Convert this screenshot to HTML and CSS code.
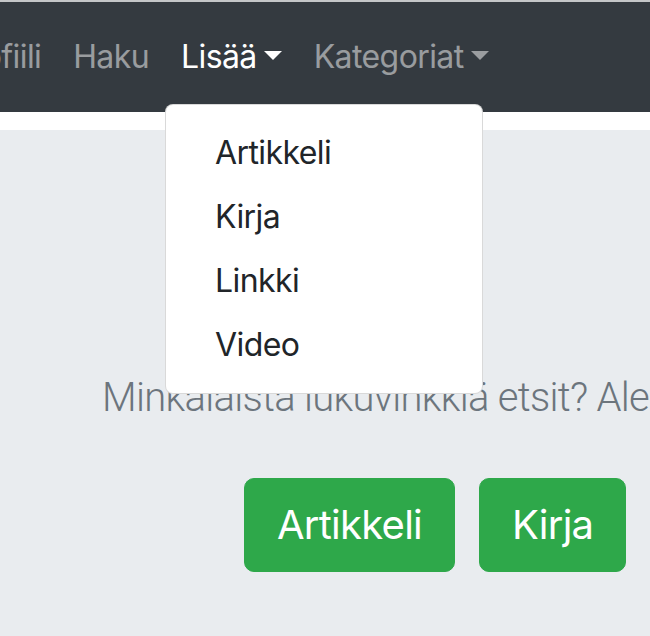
FILE: index.html
```html
<!DOCTYPE html>
<html lang="fi">
<head>
<meta charset="utf-8">
<title>Lukuvinkit</title>
<link rel="stylesheet" href="styles.css">
</head>
<body>
<nav class="navbar">
  <ul class="nav">
    <li class="nav-item"><a class="nav-link" href="#">Profiili</a></li>
    <li class="nav-item"><a class="nav-link" href="#">Haku</a></li>
    <li class="nav-item dropdown">
      <a class="nav-link active dropdown-toggle" href="#">Lisää</a>
      <div class="dropdown-menu">
        <a class="dropdown-item" href="#">Artikkeli</a>
        <a class="dropdown-item" href="#">Kirja</a>
        <a class="dropdown-item" href="#">Linkki</a>
        <a class="dropdown-item" href="#">Video</a>
      </div>
    </li>
    <li class="nav-item"><a class="nav-link dropdown-toggle" href="#">Kategoriat</a></li>
  </ul>
</nav>
<main class="jumbotron">
  <p class="lead">Minkälaista lukuvinkkiä etsit? Alempaa voit valita lukuvinkin tyypin.</p>
  <div class="btn-row">
    <a class="btn" href="#">Artikkeli</a>
    <a class="btn" href="#">Kirja</a>
    <a class="btn" href="#">Linkki</a>
    <a class="btn" href="#">Video</a>
  </div>
</main>
</body>
</html>
```
FILE: styles.css
```css
html, body {
  margin: 0;
  padding: 0;
  overflow: hidden;
  width: 650px;
  height: 636px;
}
body {
  background: #fff;
  font-family: Inter, "Noto Sans", sans-serif;
  color: #212529;
  border-top: 2px solid #c4c6c8;
  box-sizing: border-box;
}
a { text-decoration: none; }

.navbar {
  background: #343a40;
  height: 110px;
  padding: 15px 0;
  box-sizing: border-box;
}
.nav {
  list-style: none;
  margin: 0 0 0 -64px;
  padding: 0;
  display: flex;
  white-space: nowrap;
}
.nav-item { position: relative; }
.nav-link {
  display: block;
  padding: 16px;
  font-size: 32px;
  line-height: 48px;
  letter-spacing: -0.6px;
  color: rgba(255, 255, 255, 0.5);
}
.nav-link.active { color: #fff; }
.dropdown-toggle::after {
  content: "";
  display: inline-block;
  margin-left: 7px;
  vertical-align: 8px;
  border-top: 9.6px solid currentColor;
  border-left: 9px solid transparent;
  border-right: 9px solid transparent;
}

.dropdown-menu {
  position: absolute;
  top: 100%;
  left: 0;
  margin-top: 7px;
  z-index: 10;
  width: 318px;
  box-sizing: border-box;
  padding: 16px 0;
  background: #fff;
  border: 1px solid rgba(0, 0, 0, 0.15);
  border-radius: 8px;
  display: flex;
  flex-direction: column;
}
.dropdown-item {
  display: block;
  padding: 8px 49px;
  font-size: 32px;
  line-height: 48px;
  letter-spacing: -0.6px;
  color: #212529;
}

.jumbotron {
  background: #e9ecef;
  margin-top: 18px;
  height: 506px;
  padding-top: 238px;
  box-sizing: border-box;
  white-space: nowrap;
}
.lead {
  margin: 0 0 50px 102px;
  font-family: Roboto, Inter, sans-serif;
  font-size: 40px;
  line-height: 60px;
  font-weight: 300;
  letter-spacing: -0.7px;
  color: #6c757d;
}
.btn-row {
  display: flex;
  gap: 24px;
  padding-left: 244px;
}
.btn {
  display: inline-block;
  padding: 16px 32px;
  font-size: 40px;
  line-height: 60px;
  letter-spacing: -0.75px;
  color: #fff;
  background: #2ea84a;
  border: 1px solid #2ea84a;
  border-radius: 10px;
}
```
